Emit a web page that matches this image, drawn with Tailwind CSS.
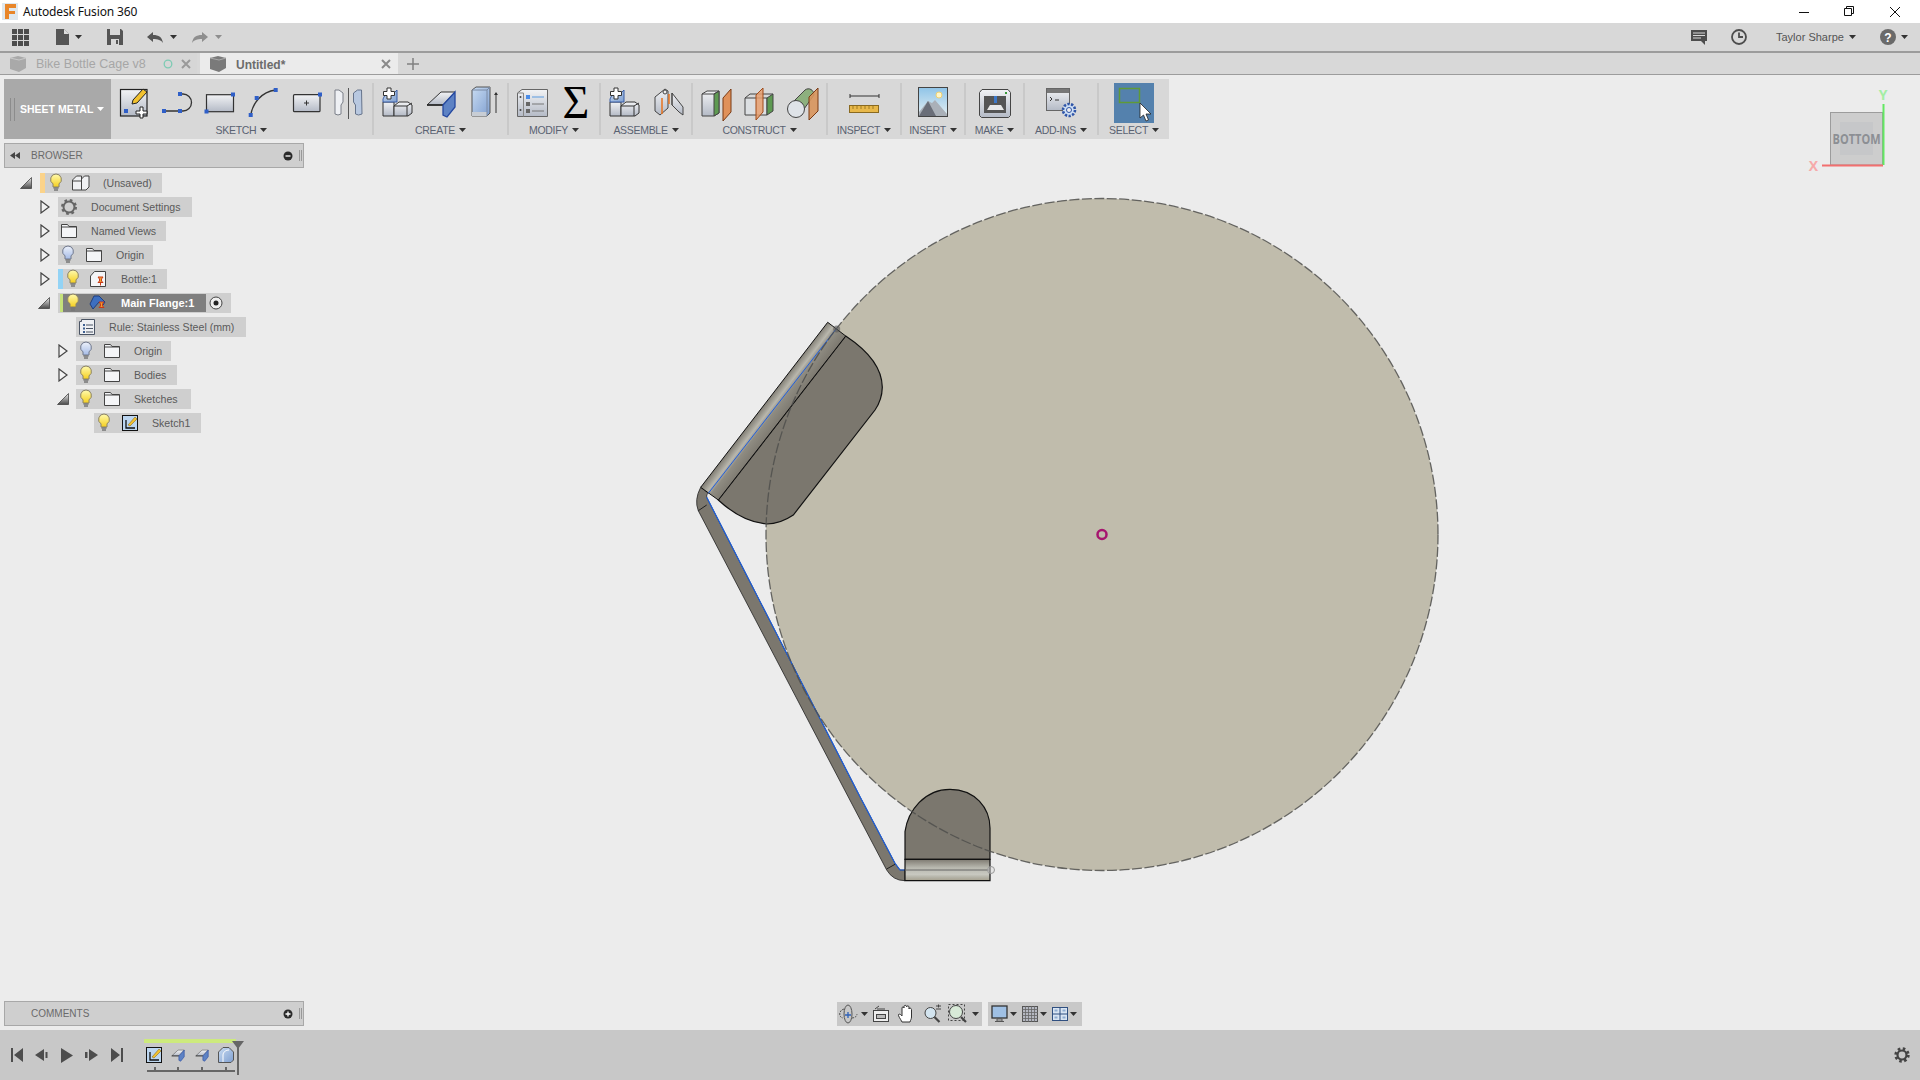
<!DOCTYPE html>
<!-- Fusion 360 main window: sheet metal workspace with an untitled design -->
<html lang="en">
<head>
  <meta charset="utf-8" />
  <title>Autodesk Fusion 360</title>
  <script src="https://cdn.jsdelivr.net/npm/@tailwindcss/browser@4"></script>
</head>
<body class="overflow-hidden">
  <!-- Shared gradients and small icons -->
  <svg width="0" height="0" class="absolute">
    <defs>
      <linearGradient id="gGray" x1="0" y1="0" x2="0" y2="1"><stop offset="0" stop-color="#f2f3f5"/><stop offset="1" stop-color="#b4bac6"/></linearGradient>
      <linearGradient id="gBlue" x1="0" y1="0" x2="1" y2="1"><stop offset="0" stop-color="#c9dcf2"/><stop offset="1" stop-color="#7f9fd0"/></linearGradient>
      <linearGradient id="gBulb" x1="0" y1="0" x2="0" y2="1"><stop offset="0" stop-color="#fffbb0"/><stop offset="1" stop-color="#f5cf1e"/></linearGradient>
      <linearGradient id="gBulbOff" x1="0" y1="0" x2="0" y2="1"><stop offset="0" stop-color="#eef2fb"/><stop offset="1" stop-color="#a5bbe6"/></linearGradient>
      <linearGradient id="gTri" x1="0" y1="0" x2="0" y2="1"><stop offset="0" stop-color="#ececec"/><stop offset="1" stop-color="#4a4a4a"/></linearGradient>
      <linearGradient id="gSky" x1="0" y1="0" x2="0" y2="1"><stop offset="0" stop-color="#8fc4e8"/><stop offset="1" stop-color="#e6eff2"/></linearGradient>
      <linearGradient id="bendTop" gradientUnits="userSpaceOnUse" x1="827.7" y1="322.3" x2="845.7" y2="336"><stop offset="0" stop-color="#86837a"/><stop offset=".3" stop-color="#b9b7ad"/><stop offset=".5" stop-color="#8f8c82"/><stop offset="1" stop-color="#7c786f"/></linearGradient>
      <linearGradient id="bendLow" gradientUnits="userSpaceOnUse" x1="0" y1="859" x2="0" y2="881"><stop offset="0" stop-color="#7c786f"/><stop offset=".4" stop-color="#b9b9b0"/><stop offset=".7" stop-color="#c8c8c0"/><stop offset=".82" stop-color="#b5b4a9"/><stop offset="1" stop-color="#a39d8b"/></linearGradient>
      <symbol id="caret" viewBox="0 0 7 4"><path d="M0 0h7L3.500 4z" fill="currentColor"/></symbol>
      <symbol id="bulb" viewBox="0 0 14 20"><path d="M7 1a5.400 5.400 0 0 0-3 9.900V14h6v-3.100A5.400 5.400 0 0 0 7 1z" fill="url(#gBulb)" stroke="#8a8266"/><path d="M4.500 15h5M5 17h4" stroke="#777" stroke-width="1.500"/></symbol>
      <symbol id="bulbOff" viewBox="0 0 14 20"><path d="M7 1a5.400 5.400 0 0 0-3 9.900V14h6v-3.100A5.400 5.400 0 0 0 7 1z" fill="url(#gBulbOff)" stroke="#70788c"/><path d="M4.500 15h5M5 17h4" stroke="#777" stroke-width="1.500"/></symbol>
      <symbol id="folder" viewBox="0 0 16 14"><path d="M.5 13.500V.5h6l1.500 2h7.500v11z" fill="#f4f5f7" stroke="#444"/><path d="M.5 3h15" stroke="#444"/></symbol>
      <symbol id="triOpen" viewBox="0 0 11 14"><path d="M1 1l8 6-8 6z" fill="#f2f2f2" stroke="#444" stroke-width="1.200"/></symbol>
      <symbol id="triDown" viewBox="0 0 12 12"><path d="M11.500 .5v11H.5z" fill="url(#gTri)" stroke="#444" stroke-width=".8"/></symbol>
      <symbol id="cubes" viewBox="0 0 36 36">
        <path d="M4 17h11v14H4z" fill="url(#gGray)" stroke="#333"/><path d="M15 21l5-4h9l4 3v8l-4 3H15z" fill="url(#gGray)" stroke="#333"/><path d="M15 21h13v10M28 21l5-3" fill="none" stroke="#333"/>
        <path d="M7 8h8l3-3v12H4v-3z" fill="url(#gBlue)" stroke="#3a5fa8"/><path d="M8 3h4v3.500h3.500v4H12V14H8v-3.500H4.500v-4H8z" fill="#fff" stroke="#333"/>
      </symbol>
      <symbol id="flange" viewBox="0 0 36 36"><path d="M4 20L18 7h14L20 20z" fill="url(#gGray)" stroke="#333"/><path d="M4 20h16" stroke="#222" stroke-width="1.500"/><path d="M20 20L32 7v15l-8 10-4-2z" fill="#5d82c4" stroke="#2448a0" stroke-width="1.300"/></symbol>
    </defs>
  </svg>

  <div class="w-[1920px] h-[1080px] flex flex-col text-[#555] font-['Liberation_Sans',sans-serif]">
    <!-- Window title bar -->
    <div class="h-[23px] bg-white flex items-center shrink-0">
      <svg width="16" height="17" viewBox="0 0 16 17" class="ml-[2px]"><rect width="16" height="17" fill="#dfe8ee"/><path d="M3 1h11v4H7v3h6v3H7v5H3z" fill="#e8862a"/></svg>
      <span class="ml-[5px] text-[12px] text-[#111] font-['Noto_Sans',sans-serif] tracking-[-0.15px]">Autodesk Fusion 360</span>
      <svg width="101" height="12" viewBox="0 0 101 12" class="ml-auto mr-5" fill="none" stroke="#111"><path d="M0 6.500h10"/><path d="M45.500 2.500h7v7h-7zM47.500 2.500V.5h7v7h-2"/><path d="M91 1l10 10M101 1L91 11"/></svg>
    </div>

    <!-- Quick access toolbar -->
    <div class="h-[28px] bg-[#d8d8d8] flex items-center shrink-0">
      <svg width="17" height="17" viewBox="0 0 17 17" class="ml-3" fill="#4d4d4d"><path d="M0 0h5v5H0zM6 0h5v5H6zM12 0h5v5h-5zM0 6h5v5H0zM6 6h5v5H6zM12 6h5v5h-5zM0 12h5v5H0zM6 12h5v5H6zM12 12h5v5h-5z"/></svg>
      <svg width="13" height="16" viewBox="0 0 13 16" class="ml-[27px]" fill="#555"><path d="M0 0h8l5 5v11H0z"/><path d="M8 0v5h5z" fill="#ddd"/></svg>
      <svg class="w-[7px] h-1 ml-[6px] text-[#333]"><use href="#caret"/></svg>
      <svg width="16" height="16" viewBox="0 0 16 16" class="ml-[25px]"><path d="M0 0h14l2 2v14H0z" fill="#555"/><path d="M3 0h10v6H3z" fill="#d8d8d8"/><path d="M4 10h8v6H4z" fill="#d8d8d8"/><path d="M9 11h2v4H9z" fill="#555"/></svg>
      <svg width="16" height="11" viewBox="0 0 16 11" class="ml-6" fill="#555"><path d="M6 0v3c6 0 9 2 10 8-2-3-5-4-10-4v3L0 5z"/></svg>
      <svg class="w-[7px] h-1 ml-[7px] text-[#333]"><use href="#caret"/></svg>
      <svg width="16" height="11" viewBox="0 0 16 11" class="ml-[15px]" fill="#8e8e8e"><path d="M10 0v3C4 3 1 5 0 11c2-3 5-4 10-4v3l6-5z"/></svg>
      <svg class="w-[7px] h-1 ml-[7px] text-[#8e8e8e]"><use href="#caret"/></svg>
      <svg width="16" height="15" viewBox="0 0 16 15" class="ml-auto" fill="#4d4d4d"><path d="M0 0h16v11h-2v4l-4-4H0z"/><path d="M2 3h12M2 5.500h12M2 8h8" stroke="#d8d8d8"/></svg>
      <svg width="16" height="16" viewBox="0 0 16 16" class="ml-6" fill="none" stroke="#4d4d4d"><circle cx="8" cy="8" r="7" stroke-width="1.800"/><path d="M8 3.500V8h4" stroke-width="1.800"/></svg>
      <span class="ml-[29px] w-[66px] whitespace-nowrap text-[11px] leading-none text-[#555]">Taylor Sharpe</span>
      <svg class="w-[7px] h-1 ml-[7px] text-[#333]"><use href="#caret"/></svg>
      <svg width="16" height="16" viewBox="0 0 16 16" class="ml-6"><circle cx="8" cy="8" r="8" fill="#6a6a6a"/><text x="8" y="12.500" text-anchor="middle" font-size="12" font-weight="700" fill="#fff" font-family="Liberation Sans">?</text></svg>
      <svg class="w-[7px] h-1 ml-[5px] mr-[12px] text-[#333]"><use href="#caret"/></svg>
    </div>

    <!-- Document tabs -->
    <div class="h-6 bg-[#d8d8d8] flex border-t-2 border-b border-[#9c9c9c] shrink-0">
      <div class="w-[197px] bg-[#d6d6d6] flex items-center text-[12.500px] text-[#a6a6a6] whitespace-nowrap">
        <svg width="16" height="16" viewBox="0 0 16 16" class="ml-[10px]"><path d="M0 2l8-2 8 2v10l-7 4-9-3z" fill="#a9a9a9"/><path d="M0 2l9 2 7-2" stroke="#c9c9c9" fill="none"/></svg>
        <span class="ml-[10px] w-[105px] pt-[2px]">Bike Bottle Cage v8</span>
        <svg width="10" height="10" viewBox="0 0 10 10" class="ml-[22px]"><circle cx="5" cy="5" r="3.800" fill="none" stroke="#7ecbb4" stroke-width="1.300"/></svg>
        <svg width="10" height="10" viewBox="0 0 10 10" class="ml-[8px]" stroke="#9a9a9a" stroke-width="2"><path d="M1 1l8 8M9 1l-8 8"/></svg>
      </div>
      <div class="w-[198px] ml-[3px] bg-[#ebebeb] flex items-center text-[12px] font-bold text-[#6c6c6c]">
        <svg width="16" height="16" viewBox="0 0 16 16" class="ml-[10px]"><path d="M0 2l8-2 8 2v10l-7 4-9-3z" fill="#7a7a7a"/><path d="M0 2l9 2 7-2" stroke="#aaa" fill="none"/></svg>
        <span class="ml-[10px] pt-[2px]">Untitled*</span>
        <svg width="10" height="10" viewBox="0 0 10 10" class="ml-auto mr-[7px]" stroke="#8a8a8a" stroke-width="2"><path d="M1 1l8 8M9 1l-8 8"/></svg>
      </div>
      <svg width="12" height="12" viewBox="0 0 12 12" class="ml-[9px] self-center" stroke="#808080" stroke-width="1.500"><path d="M6 0v12M0 6h12"/></svg>
    </div>

    <!-- 3D canvas area with panels on top of it -->
    <div class="relative flex-1 bg-[#ececec] flex flex-col pl-1 pt-1">
      <!-- Model, origin point and view cube -->
      <svg class="absolute left-0 top-0" width="1920" height="955" viewBox="0 75 1920 955">
        <circle cx="1102" cy="534.500" r="336" fill="#c0bcac"/>
        <path d="M700.700 487.300Q694 500 698.300 510.700L860 819.300 886.700 870Q893 880.700 905 880.700V870H900L895 863.300 860 796.700 706.700 497.300Q706 494 708.300 493.300z" fill="#7b776e" stroke="#222" stroke-width=".8"/>
        <path d="M706.700 497.300L860 796.700 895 863.300 900 870H905" fill="none" stroke="#1c5fe0" stroke-width="1.200"/>
        <path d="M698.300 510.700L706.700 505M886.700 869L895 864.300" stroke="#222"/>
        <path d="M845.700 336Q882 360 882.300 387.300 882 400 875 410L793.300 515Q780 524 766.700 524 742 522 718.300 500z" fill="#7b776e" stroke="#111" stroke-width="1.200"/>
        <path d="M827.700 322.300L845.700 336 718.300 500 700.700 487.300z" fill="url(#bendTop)" stroke="#111" stroke-width="1"/>
        <path d="M836.700 328.300L708.300 493.300" stroke="#1f5fe0" stroke-width="1"/>
        <path d="M905 831.700C908 810 925 789.300 950 789.300 975 789.300 990 808 990 828.300V859.300H905z" fill="#7b776e" stroke="#111" stroke-width="1.200"/>
        <path d="M905 859.300h85v21.400h-85z" fill="url(#bendLow)" stroke="#111" stroke-width="1.200"/>
        <path d="M905 870h86" stroke="#666"/>
        <circle cx="1102" cy="534.500" r="336" fill="none" stroke="#4f4f4c" stroke-opacity=".85" stroke-width="1.300" stroke-dasharray="10 2.500"/>
        <circle cx="836.700" cy="329" r="3.500" fill="#555" fill-opacity=".6"/>
        <circle cx="991" cy="870" r="3.500" fill="#ddd" fill-opacity=".4" stroke="#999"/>
        <circle cx="1102" cy="534.500" r="4.500" fill="#c0bcac" stroke="#a6156f" stroke-width="2.500"/>
        <rect x="1830.500" y="112.500" width="52" height="52.500" fill="#cdcdcd" stroke="#9c9c9c"/>
        <rect x="1840" y="122" width="33" height="33" fill="#c6c7c9"/>
        <text x="1856.500" y="144" text-anchor="middle" font-size="14" font-weight="700" fill="#8c8f94" font-family="Open Sans" textLength="48" lengthAdjust="spacingAndGlyphs">BOTTOM</text>
        <path d="M1883.500 104v61" stroke="#62e862" stroke-width="2"/>
        <path d="M1822 165.500h61" stroke="#f26f6f" stroke-width="2"/>
        <text x="1883" y="100" text-anchor="middle" font-size="14" font-weight="700" fill="#a4eea4" font-family="Open Sans">Y</text>
        <text x="1813.500" y="171" text-anchor="middle" font-size="14" font-weight="700" fill="#f6aaaa" font-family="Open Sans">X</text>
      </svg>

      <!-- Ribbon -->
      <div class="relative w-[1165px] h-[60px] bg-[#d8d8d8] flex items-center shrink-0 text-[10.500px] text-[#5a6272]">
        <div class="self-stretch w-[107px] bg-[#a9a9a9] flex items-center text-white font-bold text-[10.500px]">
          <div class="ml-[6px] w-[5px] h-[23px] border-x border-[#8c8c8c]"></div>
          <span class="ml-[5px] pt-[1px]">SHEET METAL</span>
          <svg class="w-[7px] h-1 ml-[4px]"><use href="#caret"/></svg>
        </div>

        <div class="w-[263px] h-[52px] flex flex-col items-center border-r-2 border-[#c9c9c9]">
          <div class="flex gap-[7px] pt-[2px]">
            <svg width="36" height="36" viewBox="0 0 36 36"><rect x="4.500" y="4.500" width="26.500" height="26.500" fill="url(#gGray)" stroke="#222" stroke-width="1.200"/><path d="M17 15L27 4l4 3-10 11-5 1z" fill="#f2c230" stroke="#222"/><path d="M8 24h4v4H8z" fill="#2f5fc8"/><path d="M24 22h3v4h4v3h-4v4h-3v-4h-4v-3h4z" fill="#fff" stroke="#222"/></svg>
            <svg width="36" height="36" viewBox="0 0 36 36"><path d="M21 9h3a8.500 8.500 0 0 1 0 17H5" fill="none" stroke="#333" stroke-width="1.300"/><path d="M19 7h4v4h-4zM3 24h4v4H3zM19 24h4v4h-4z" fill="#2f5fc8"/></svg>
            <svg width="36" height="36" viewBox="0 0 36 36"><rect x="4.500" y="9.700" width="27" height="17" fill="url(#gGray)" stroke="#333" stroke-width="1.200"/><path d="M29 7.500h4v4h-4zM2.500 24.500h4v4h-4z" fill="#2f5fc8"/></svg>
            <svg width="36" height="36" viewBox="0 0 36 36"><path d="M5.700 30C8 18 16 7 30.700 5" fill="none" stroke="#333" stroke-width="1.300"/><path d="M3.700 28h4v4h-4zM9.700 11h4v4h-4zM28.700 3h4v4h-4z" fill="#2f5fc8"/></svg>
            <svg width="36" height="36" viewBox="0 0 36 36"><rect x="5.500" y="9.700" width="26.500" height="17" rx="1" fill="url(#gGray)" stroke="#333" stroke-width="1.200"/><path d="M18.500 15.500v5M16 18h5" stroke="#333"/><path d="M30 7.500h4v4h-4z" fill="#2f5fc8"/></svg>
            <svg width="36" height="36" viewBox="0 0 36 36"><path d="M4 5h4l4 3v9l-2 3v9l-3 1-3-1z" fill="#eef0f4" stroke="#7a7f88"/><path d="M17.500 3v31" stroke="#555"/><path d="M30.500 5h-4l-4 3v9l2 3v9l3 1 3.500-1z" fill="#b8c8e0" stroke="#66748c"/></svg>
          </div>
          <div class="leading-[12px] mt-[3px] tracking-[-0.3px]">SKETCH<svg class="inline-block w-[7px] h-1 ml-1 align-[2px] text-[#333]"><use href="#caret"/></svg></div>
        </div>

        <div class="w-[135px] h-[52px] flex flex-col items-center border-r-2 border-[#c9c9c9]">
          <div class="flex gap-[8px] pt-[2px]">
            <svg width="36" height="36"><use href="#cubes"/></svg>
            <svg width="36" height="36"><use href="#flange"/></svg>
            <svg width="36" height="36" viewBox="0 0 36 36"><path d="M5 5l4-3h14v26l-3 3H5z" fill="url(#gBlue)" stroke="#555"/><path d="M5 27h15v4H5z" fill="#c8cdd4"/><path d="M20 5v26M5 5h15l3-3" fill="none" stroke="#7a8aa4"/><path d="M29 8v20" stroke="#333"/><path d="M27 10l2-3 2 3z" fill="#333"/></svg>
          </div>
          <div class="leading-[12px] mt-[3px] tracking-[-0.3px]">CREATE<svg class="inline-block w-[7px] h-1 ml-1 align-[2px] text-[#333]"><use href="#caret"/></svg></div>
        </div>

        <div class="w-[92px] h-[52px] flex flex-col items-center border-r-2 border-[#c9c9c9]">
          <div class="flex gap-[8px] pt-[2px]">
            <svg width="36" height="36" viewBox="0 0 36 36"><path d="M3.500 8L8 4.500h25.500v27h-30z" fill="url(#gGray)" stroke="#666"/><path d="M3.500 8h6v23.500" fill="none" stroke="#888"/><circle cx="6.500" cy="12" r="1" fill="#444"/><circle cx="6.500" cy="25" r="1" fill="#444"/><path d="M12 10h4v4h-4z" fill="#4a8ce8"/><path d="M12 17h4v4h-4zM12 24h4v4h-4z" fill="#666"/><path d="M18 12h12" stroke="#5a9be0"/><path d="M18 19h12M18 26h12" stroke="#777"/></svg>
            <span class="w-9 h-9 flex items-center justify-center text-[46px] leading-none text-black font-['Liberation_Serif',serif]">Σ</span>
          </div>
          <div class="leading-[12px] mt-[3px] tracking-[-0.3px]">MODIFY<svg class="inline-block w-[7px] h-1 ml-1 align-[2px] text-[#333]"><use href="#caret"/></svg></div>
        </div>

        <div class="w-[92px] h-[52px] flex flex-col items-center border-r-2 border-[#c9c9c9]">
          <div class="flex gap-[8px] pt-[2px]">
            <svg width="36" height="36"><use href="#cubes"/></svg>
            <svg width="36" height="36" viewBox="0 0 36 36"><path d="M5 12l10-8 3 2v17l-8 7-5-4z" fill="url(#gGray)" stroke="#444"/><path d="M22 8l11 14v8l-4-3-7-7z" fill="url(#gGray)" stroke="#444"/><path d="M22 8v12" stroke="#444"/><path d="M12 13v16M19 9v10" stroke="#e8731e" stroke-width="1.500"/><circle cx="15" cy="7" r="2" fill="#eee" stroke="#444"/></svg>
          </div>
          <div class="leading-[12px] mt-[3px] tracking-[-0.3px]">ASSEMBLE<svg class="inline-block w-[7px] h-1 ml-1 align-[2px] text-[#333]"><use href="#caret"/></svg></div>
        </div>

        <div class="w-[135px] h-[52px] flex flex-col items-center border-r-2 border-[#c9c9c9]">
          <div class="flex gap-[7px] pt-[2px]">
            <svg width="36" height="36" viewBox="0 0 36 36"><path d="M3 9l5-3 12 0v22l-5 3H3z" fill="url(#gGray)" stroke="#444"/><path d="M15 9v22l5-3V6z" fill="#5e9a52" stroke="#444"/><path d="M3 9h12l5-3" fill="none" stroke="#444"/><path d="M24 13l8-9v23l-8 9z" fill="#e0915a" stroke="#7a3a14"/></svg>
            <svg width="36" height="36" viewBox="0 0 36 36"><path d="M3 13h22v17H3z" fill="#dcdfe2" stroke="#444"/><path d="M25 13l6-4v17l-6 4z" fill="#5e9a52" stroke="#444"/><path d="M3 13l5-4h23" fill="none" stroke="#444"/><path d="M14 10l7-7v24l-7 8z" fill="#e8a070" fill-opacity=".85" stroke="#a04a18"/></svg>
            <svg width="36" height="36" viewBox="0 0 36 36"><path d="M3 22L20 5c4-3 9 0 9 5L14 31z" fill="#8db07e" stroke="#444"/><circle cx="11" cy="24" r="8.500" fill="#dfe3e8" stroke="#444"/><path d="M24 12l9-9v23l-9 9z" fill="#d8955c" fill-opacity=".9" stroke="#7a3a14"/></svg>
          </div>
          <div class="leading-[12px] mt-[3px] tracking-[-0.3px]">CONSTRUCT<svg class="inline-block w-[7px] h-1 ml-1 align-[2px] text-[#333]"><use href="#caret"/></svg></div>
        </div>

        <div class="w-[74px] h-[52px] flex flex-col items-center border-r-2 border-[#c9c9c9]">
          <div class="flex pt-[2px]">
            <svg width="36" height="36" viewBox="0 0 36 36"><path d="M4 13v-4M33 13V9M4 11h29" stroke="#333"/><rect x="3.500" y="20.500" width="29" height="7" fill="#e8b84a" stroke="#8a6a20"/><path d="M7 21v3M11 21v3M15 21v3M19 21v3M23 21v3M27 21v3" stroke="#a07c20"/></svg>
          </div>
          <div class="leading-[12px] mt-[3px] tracking-[-0.3px]">INSPECT<svg class="inline-block w-[7px] h-1 ml-1 align-[2px] text-[#333]"><use href="#caret"/></svg></div>
        </div>

        <div class="w-[64px] h-[52px] flex flex-col items-center border-r-2 border-[#c9c9c9]">
          <div class="flex pt-[2px]">
            <svg width="36" height="36" viewBox="0 0 36 36"><rect x="3.500" y="2.500" width="29" height="29" fill="url(#gSky)" stroke="#444"/><circle cx="24" cy="10" r="3" fill="#fff6c8" stroke="#f0d070"/><path d="M4 27l9-11 4 2 3-3 12 14v2H4z" fill="#aab0b8"/><path d="M4 31l9-15 8 15z" fill="#6a6e78"/></svg>
          </div>
          <div class="leading-[12px] mt-[3px] tracking-[-0.3px]">INSERT<svg class="inline-block w-[7px] h-1 ml-1 align-[2px] text-[#333]"><use href="#caret"/></svg></div>
        </div>

        <div class="w-[59px] h-[52px] flex flex-col items-center border-r-2 border-[#c9c9c9]">
          <div class="flex pt-[2px]">
            <svg width="36" height="36" viewBox="0 0 36 36"><path d="M5 4.500h26l2.500 3v23l-2 2h-27l-2-2v-23z" fill="url(#gGray)" stroke="#444"/><rect x="7" y="11" width="22" height="17" fill="#555"/><path d="M17 11h3v7h-3z" fill="#3d78c8"/><path d="M10 25l3-5h11l3 5z" fill="#e8e8e8"/><path d="M28 7h2v2h-2z" fill="#3a9a3a"/></svg>
          </div>
          <div class="leading-[12px] mt-[3px] tracking-[-0.3px]">MAKE<svg class="inline-block w-[7px] h-1 ml-1 align-[2px] text-[#333]"><use href="#caret"/></svg></div>
        </div>

        <div class="w-[74px] h-[52px] flex flex-col items-center border-r-2 border-[#c9c9c9]">
          <div class="flex pt-[2px]">
            <svg width="36" height="36" viewBox="0 0 36 36"><rect x="3.500" y="3.500" width="23" height="22" fill="url(#gGray)" stroke="#666"/><path d="M4 4h22v4H4z" fill="#777"/><path d="M7 12l2 2-2 2M12 15h4" fill="none" stroke="#333"/><circle cx="26" cy="25" r="6" fill="#cfe0f5" stroke="#2f55a8" stroke-width="2.600" stroke-dasharray="2.300 1.400"/><circle cx="26" cy="25" r="2.500" fill="#eee" stroke="#2f55a8"/></svg>
          </div>
          <div class="leading-[12px] mt-[3px] tracking-[-0.3px]">ADD-INS<svg class="inline-block w-[7px] h-1 ml-1 align-[2px] text-[#333]"><use href="#caret"/></svg></div>
        </div>

        <div class="w-[70px] h-[52px] flex flex-col items-center">
          <svg width="40" height="40" viewBox="0 0 40 40" class="shrink-0"><rect width="40" height="40" fill="#5481ad"/><rect x="5.500" y="5.500" width="20" height="14" fill="none" stroke="#5f9a38" stroke-width="1.500"/><path d="M26 20v15l3.500-3 2.500 6 2.500-1-2.500-6h5z" fill="#fff" stroke="#222" stroke-width=".8"/></svg>
          <div class="leading-[12px] mt-[1px] tracking-[-0.3px]">SELECT<svg class="inline-block w-[7px] h-1 ml-1 align-[2px] text-[#333]"><use href="#caret"/></svg></div>
        </div>
      </div>

      <!-- Browser panel header -->
      <div class="relative w-[300px] h-[25px] mt-1 bg-[#cfcfcf] border border-[#a8a8a8] flex items-center text-[10px] text-[#6a6a6a] shrink-0">
        <svg width="10" height="7" viewBox="0 0 10 7" class="ml-[5px]" fill="#444"><path d="M5 0v7L0 3.500zM10 0v7L5 3.500z"/></svg>
        <span class="ml-[11px]">BROWSER</span>
        <svg width="10" height="10" viewBox="0 0 10 10" class="ml-auto"><circle cx="5" cy="5" r="4.500" fill="#2a2a2a"/><path d="M2.500 5h5" stroke="#fff" stroke-width="1.300"/></svg>
        <div class="ml-[6px] mr-[1px] w-[3px] h-[11px] border-x border-[#999]"></div>
      </div>

      <!-- Browser tree -->
      <div class="relative mt-[5px] flex flex-col gap-1 text-[10.600px] leading-5 text-[#5a5a5a]">
        <div class="flex h-5 items-center ml-[16px]">
          <svg width="12" height="12" class="mr-[8px]"><use href="#triDown"/></svg>
          <div class="flex items-center bg-[#cfcfcf] h-5 pr-[10px]">
            <div class="w-[5px] h-5 bg-[#fbd38a]"></div>
            <svg width="14" height="20" class="mx-[4px]"><use href="#bulb"/></svg>
            <svg width="18" height="16" viewBox="0 0 18 16" class="ml-[5px]" fill="#f0f1f3" stroke="#444"><path d="M.5 5l4-4h5v5h-9zM9.500 4l3-3h4.500v11l-3 3H.5V6"/><path d="M9.500 6v9"/></svg>
            <span class="ml-[13px]">(Unsaved)</span>
          </div>
        </div>
        <div class="flex h-5 items-center ml-[36px]">
          <svg width="11" height="14" class="mr-[7px]"><use href="#triOpen"/></svg>
          <div class="flex items-center bg-[#cfcfcf] h-5 pr-[11px]">
            <svg width="16" height="16" viewBox="0 0 16 16" class="ml-[3px]"><circle cx="8" cy="8" r="5.500" fill="none" stroke="#666" stroke-width="2"/><circle cx="8" cy="8" r="6.500" fill="none" stroke="#666" stroke-width="3" stroke-dasharray="2.500 2.600"/></svg>
            <span class="ml-[14px]">Document Settings</span>
          </div>
        </div>
        <div class="flex h-5 items-center ml-[36px]">
          <svg width="11" height="14" class="mr-[7px]"><use href="#triOpen"/></svg>
          <div class="flex items-center bg-[#cfcfcf] h-5 pr-[10px]">
            <svg width="16" height="14" class="ml-[3px]"><use href="#folder"/></svg>
            <span class="ml-[14px]">Named Views</span>
          </div>
        </div>
        <div class="flex h-5 items-center ml-[36px]">
          <svg width="11" height="14" class="mr-[7px]"><use href="#triOpen"/></svg>
          <div class="flex items-center bg-[#cfcfcf] h-5 pr-[9px]">
            <svg width="14" height="20" class="ml-[3px]"><use href="#bulbOff"/></svg>
            <svg width="16" height="14" class="ml-[11px]"><use href="#folder"/></svg>
            <span class="ml-[14px]">Origin</span>
          </div>
        </div>
        <div class="flex h-5 items-center ml-[36px]">
          <svg width="11" height="14" class="mr-[7px]"><use href="#triOpen"/></svg>
          <div class="flex items-center bg-[#cfcfcf] h-5 pr-[10px]">
            <div class="w-[5px] h-5 bg-[#93d3f5]"></div>
            <svg width="14" height="20" class="ml-[3px]"><use href="#bulb"/></svg>
            <svg width="16" height="16" viewBox="0 0 16 16" class="ml-[10px]"><path d="M.5 5l4-4.500h11v15H.5z" fill="#f4f5f7" stroke="#444"/><path d="M8 6h5l-1.500 2v2l1.500 1.500H8L9.500 10V8z" fill="#f0a030" stroke="#c83a18"/><path d="M10.500 11.500v3" stroke="#c83a18"/></svg>
            <span class="ml-[15px]">Bottle:1</span>
          </div>
        </div>
        <div class="flex h-5 items-center ml-[34px]">
          <svg width="12" height="12" class="mr-[8px]"><use href="#triDown"/></svg>
          <div class="flex items-center bg-[#cfcfcf] h-5 pr-[8px]">
            <div class="flex items-center bg-[#7f7f7f] h-[18px] ml-[2px] pr-[12px] text-white font-bold text-[11px]">
              <div class="w-[3px] h-[18px] bg-[#c5e17a]"></div>
              <svg width="14" height="20" class="ml-[3px]"><use href="#bulb"/></svg>
              <svg width="18" height="16" viewBox="0 0 18 16" class="ml-[9px]"><path d="M1 9l4-8h5l6 6-2 3-4-3-6 7z" fill="#3d6fc0" stroke="#1f3f80"/><path d="M10 7h5l-1.500 2v2l1.500 1.500h-5l1.500-1.500V9z" fill="#f0a030" stroke="#c83a18"/></svg>
              <span class="ml-[14px]">Main Flange:1</span>
            </div>
            <svg width="14" height="14" viewBox="0 0 14 14" class="ml-[3px]"><circle cx="7" cy="7" r="6" fill="#eee" stroke="#444"/><circle cx="7" cy="7" r="2.500" fill="#222"/></svg>
          </div>
        </div>
        <div class="flex h-5 items-center ml-[72px]">
          <div class="flex items-center bg-[#cfcfcf] h-5 pr-3">
            <svg width="16" height="16" viewBox="0 0 16 16" class="ml-[3px]"><path d="M.5 2.500h2V.5h13v15H.5z" fill="#eef0f3" stroke="#4a5464"/><path d="M4 5h2v2H4zM4 8.500h2v2H4zM4 12h2v2H4z" fill="#3d5f90"/><path d="M7 6h7M7 9.500h7M7 13h7" stroke="#4a5464"/></svg>
            <span class="ml-[14px]">Rule: Stainless Steel (mm)</span>
          </div>
        </div>
        <div class="flex h-5 items-center ml-[54px]">
          <svg width="11" height="14" class="mr-[7px]"><use href="#triOpen"/></svg>
          <div class="flex items-center bg-[#cfcfcf] h-5 pr-[9px]">
            <svg width="14" height="20" class="ml-[3px]"><use href="#bulbOff"/></svg>
            <svg width="16" height="14" class="ml-[11px]"><use href="#folder"/></svg>
            <span class="ml-[14px]">Origin</span>
          </div>
        </div>
        <div class="flex h-5 items-center ml-[54px]">
          <svg width="11" height="14" class="mr-[7px]"><use href="#triOpen"/></svg>
          <div class="flex items-center bg-[#cfcfcf] h-5 pr-[11px]">
            <svg width="14" height="20" class="ml-[3px]"><use href="#bulb"/></svg>
            <svg width="16" height="14" class="ml-[11px]"><use href="#folder"/></svg>
            <span class="ml-[14px]">Bodies</span>
          </div>
        </div>
        <div class="flex h-5 items-center ml-[53px]">
          <svg width="12" height="12" class="mr-[7px]"><use href="#triDown"/></svg>
          <div class="flex items-center bg-[#cfcfcf] h-5 pr-[13px]">
            <svg width="14" height="20" class="ml-[3px]"><use href="#bulb"/></svg>
            <svg width="16" height="14" class="ml-[11px]"><use href="#folder"/></svg>
            <span class="ml-[14px]">Sketches</span>
          </div>
        </div>
        <div class="flex h-5 items-center ml-[90px]">
          <div class="flex items-center bg-[#cfcfcf] h-5 pr-[11px]">
            <svg width="14" height="20" class="ml-[3px]"><use href="#bulb"/></svg>
            <svg width="16" height="16" viewBox="0 0 16 16" class="ml-[11px]"><rect x=".5" y=".5" width="15" height="15" fill="#bcd6f0" stroke="#111"/><path d="M4 5v8h9" fill="none" stroke="#111" stroke-width="1.300"/><path d="M6 10l7-8 2 2-7 7z" fill="#f2c230" stroke="#7a5a10" stroke-width=".5"/></svg>
            <span class="ml-[14px]">Sketch1</span>
          </div>
        </div>
      </div>

      <!-- Comments panel -->
      <div class="relative w-[300px] h-[25px] mt-auto mb-[4px] bg-[#cfcfcf] border border-[#a8a8a8] flex items-center text-[10px] text-[#6a6a6a] shrink-0">
        <span class="ml-[26px]">COMMENTS</span>
        <svg width="10" height="10" viewBox="0 0 10 10" class="ml-auto"><circle cx="5" cy="5" r="4.500" fill="#2a2a2a"/><path d="M2.500 5h5M5 2.500v5" stroke="#fff" stroke-width="1.300"/></svg>
        <div class="ml-[6px] mr-[1px] w-[3px] h-[11px] border-x border-[#999]"></div>
      </div>

      <!-- Navigation bar, floats over the canvas -->
      <div class="absolute left-[837px] bottom-[4px] flex gap-[6px] text-[#333]">
        <div class="w-[145px] h-6 bg-[#c8c8c8] flex items-center">
          <svg width="20" height="20" viewBox="0 0 20 20" class="ml-[1px]" fill="none" stroke="#555"><ellipse cx="10" cy="10" rx="4" ry="9"/><path d="M6 5C1 6 0 13 5 14M14 14c3 0 5-2 5-4" stroke-dasharray="2 1"/><path d="M7 11h6M10 8v6" stroke="#2f62b8" stroke-width="1.300"/></svg>
          <svg class="w-[7px] h-1 ml-[3px]"><use href="#caret"/></svg>
          <svg width="20" height="20" viewBox="0 0 20 20" class="ml-[3px]" fill="none" stroke="#444"><rect x="2.500" y="6.500" width="15" height="11" fill="#eee"/><rect x="5.500" y="10.500" width="9" height="4" fill="#bbb"/><path d="M4 5l4-3M6 5h8"/></svg>
          <svg width="20" height="20" viewBox="0 0 20 20" class="ml-[6px]" fill="#fff" stroke="#333"><path d="M5 18C3 14 1 12 1.500 10.500 3 9.500 4 11 5 12V4c0-1.500 2-1.500 2 0V2.500c0-1.500 2.500-1.500 2.500 0V3c0-1.500 2.500-1.500 2.500 0V5c0-1.500 2.500-1 2.500 .5V13c0 2-1 3-1.500 5z"/></svg>
          <svg width="20" height="20" viewBox="0 0 20 20" class="ml-[6px]" fill="none" stroke="#444"><circle cx="7.500" cy="9" r="5.500" fill="#d3e4ef"/><path d="M11.500 13l5 5" stroke-width="2.200"/><path d="M13 5h5M15.500 .5v3M13 2h5" stroke-width="1"/></svg>
          <svg width="20" height="20" viewBox="0 0 20 20" class="ml-[5px]" fill="none" stroke="#444"><rect x=".5" y=".5" width="16" height="16" stroke-dasharray="2 2"/><circle cx="8" cy="8" r="6.500" fill="#d8ead8"/><path d="M13 13l5 5" stroke-width="2.200"/></svg>
          <svg class="w-[7px] h-1 ml-1"><use href="#caret"/></svg>
        </div>
        <div class="w-[94px] h-6 bg-[#c8c8c8] flex items-center">
          <svg width="18" height="18" viewBox="0 0 18 18" class="ml-[3px]"><rect x="1" y="1" width="15" height="12" fill="#9fc0e4" stroke="#333" stroke-width="1.300"/><path d="M6 14h5v2H6zM4 16.500h9" stroke="#555" fill="#ddd"/></svg>
          <svg class="w-[7px] h-1 ml-[1px]"><use href="#caret"/></svg>
          <svg width="16" height="16" viewBox="0 0 16 16" class="ml-[5px]"><rect x=".5" y=".5" width="15" height="15" fill="#b5b8c2" stroke="#555"/><path d="M3.500 0v16M6.500 0v16M9.500 0v16M12.500 0v16M0 3.500h16M0 6.500h16M0 9.500h16M0 12.500h16" stroke="#666" stroke-width=".8"/></svg>
          <svg class="w-[7px] h-1 ml-[2px]"><use href="#caret"/></svg>
          <svg width="16" height="14" viewBox="0 0 16 14" class="ml-[5px]"><rect x=".5" y=".5" width="15" height="13" fill="#d8e4f2" stroke="#2f4f80"/><path d="M8 0v14M0 7h16" stroke="#2f4f80"/><path d="M2.500 2.500h3v2h-3zM10.500 2.500h3v2h-3zM2.500 9.500h3v2h-3zM10.500 9.500h3v2h-3z" fill="#8faccf"/></svg>
          <svg class="w-[7px] h-1 ml-[2px]"><use href="#caret"/></svg>
        </div>
      </div>
    </div>

    <!-- Timeline -->
    <div class="h-[50px] bg-[#c8c8c8] flex items-center shrink-0">
      <svg width="12" height="14" viewBox="0 0 12 14" class="ml-[11px]" fill="#4d4d4d"><path d="M0 0h2v14H0zM12 0v14L3 7z"/></svg>
      <svg width="13" height="12" viewBox="0 0 13 12" class="ml-[12px]" fill="#4d4d4d"><path d="M9 0v12L0 6zM10.500 3h2v6h-2z"/></svg>
      <svg width="12" height="15" viewBox="0 0 12 15" class="ml-[13px]" fill="#4d4d4d"><path d="M0 0l12 7.500L0 15z"/></svg>
      <svg width="13" height="12" viewBox="0 0 13 12" class="ml-[12px]" fill="#4d4d4d"><path d="M4 0v12l9-6zM0 3h2.500v6H0z"/></svg>
      <svg width="12" height="14" viewBox="0 0 12 14" class="ml-[13px]" fill="#4d4d4d"><path d="M0 0v14l9-7zM10 0h2v14h-2z"/></svg>
      <!-- Feature history -->
      <div class="ml-[21px] relative w-[100px] h-[50px]">
        <div class="w-[92px] h-[4px] mt-[9px] bg-[#cdea7d]"></div>
        <div class="flex gap-2 ml-[2px] mt-[4px]">
          <svg width="16" height="16" viewBox="0 0 16 16"><rect x=".5" y=".5" width="15" height="15" fill="#bcd6f0" stroke="#111"/><path d="M4 5v8h9" fill="none" stroke="#111" stroke-width="1.300"/><path d="M6 10l7-8 2 2-7 7z" fill="#f2c230" stroke="#7a5a10" stroke-width=".5"/></svg>
          <svg width="16" height="16"><use href="#flange"/></svg>
          <svg width="16" height="16"><use href="#flange"/></svg>
          <svg width="16" height="16" viewBox="0 0 16 16"><path d="M.5 5L5 .5h6L15.500 5v8L13 15.500H.5z" fill="url(#gBlue)" stroke="#555"/><path d="M5 15V8c0-3 3-5 6-5" fill="none" stroke="#fff"/></svg>
        </div>
        <div class="h-[2px] w-[88px] ml-[3px] mt-[7px] bg-[#666]"></div>
        <!-- ticks and the playhead sit on the ruler -->
        <div class="absolute left-[10px] top-[37px] w-[2px] h-[4px] bg-[#666]"></div>
        <div class="absolute left-[33px] top-[37px] w-[2px] h-[4px] bg-[#666]"></div>
        <div class="absolute left-[57px] top-[37px] w-[2px] h-[4px] bg-[#666]"></div>
        <div class="absolute left-[81px] top-[37px] w-[2px] h-[4px] bg-[#666]"></div>
        <svg width="12" height="34" viewBox="0 0 12 34" class="absolute left-[88px] top-[11px]" fill="#666"><path d="M0 0h12L6 8z"/><path d="M5 6h2v28H5z"/></svg>
      </div>
      <svg width="16" height="16" viewBox="0 0 16 16" class="ml-auto mr-[10px]"><circle cx="8" cy="8" r="4.500" fill="none" stroke="#444" stroke-width="2.200"/><circle cx="8" cy="8" r="6.300" fill="none" stroke="#444" stroke-width="2.800" stroke-dasharray="2.500 2.450"/></svg>
    </div>
  </div>
</body>
</html>
